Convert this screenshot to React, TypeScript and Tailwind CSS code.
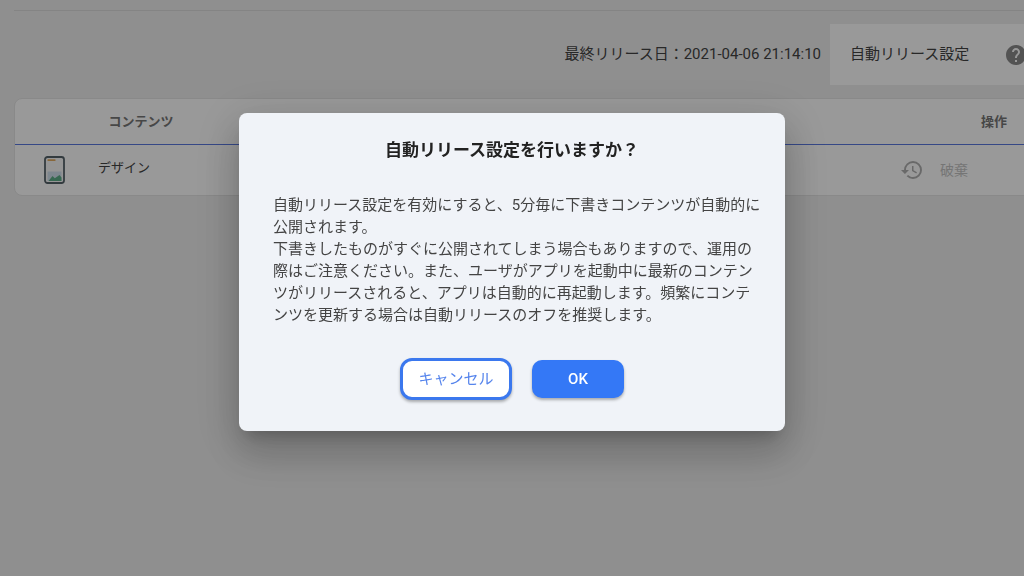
import React from "react";
import { MdHelp, MdHistory } from "react-icons/md";

const rows = [{ name: "デザイン" }];

function DesignIcon() {
  return (
    <svg width="21" height="28" viewBox="0 0 21 28" className="block" aria-hidden="true">
      <rect x="1" y="1" width="19" height="26" rx="2.5" fill="#f8f8f8" stroke="#56636a" strokeWidth="1.8" />
      <rect x="3.5" y="3.2" width="8" height="1.8" rx="0.5" fill="#e3ac62" />
      <path d="M3.5 15.5 H17.5 V25 H3.5 Z" fill="#d3e1ee" />
      <path d="M4.5 25 L8.5 20 L10.8 22.3 L15.5 19 L17.5 21.5 V25 Z" fill="#5cae88" />
    </svg>
  );
}

function ReleaseBar() {
  return (
    <div className="mt-[13px] flex items-center justify-end gap-[9px] text-[15px] text-[#444]">
      <p>最終リリース日：2021-04-06 21:14:10</p>
      <div className="flex h-[61px] w-[259px] items-center gap-[35px] bg-white px-5">
        <span>自動リリース設定</span>
        <button type="button" aria-label="ヘルプ" className="text-[#8a8a8a]">
          <MdHelp size={24} />
        </button>
      </div>
    </div>
  );
}

function ContentTable() {
  return (
    <div className="mt-[13px] overflow-hidden rounded-lg border border-[#e4e4e4] bg-white">
      <table className="w-full table-fixed border-collapse text-[13px]">
        <thead>
          <tr className="h-[45px] border-b border-[#5a78e0] text-[#777]">
            <th className="w-[83px]"></th>
            <th className="w-[86px] font-bold">コンテンツ</th>
            <th></th>
            <th className="w-[188px] font-bold">操作</th>
          </tr>
        </thead>
        <tbody>
          {rows.map((row) => (
            <tr key={row.name} className="h-[51px]">
              <td className="pl-[29px]">
                <DesignIcon />
              </td>
              <td className="pb-1 text-[#444]">{row.name}</td>
              <td></td>
              <td>
                <button type="button" disabled className="flex items-center gap-4 text-sm text-[#c4c4c4]">
                  <MdHistory size={24} className="text-[#b0b0b0]" />
                  破棄
                </button>
              </td>
            </tr>
          ))}
        </tbody>
      </table>
    </div>
  );
}

function ReleaseDialog() {
  return (
    <div className="fixed inset-0 flex items-center justify-center bg-black/40 pb-8">
      <div
        role="dialog"
        aria-modal="true"
        aria-labelledby="release-title"
        className="w-[546px] max-w-full rounded-lg bg-[#f0f3f8] pt-6 pr-5 pb-[31px] pl-[34px] shadow-[0_11px_15px_-7px_rgba(0,0,0,0.2),0_24px_38px_3px_rgba(0,0,0,0.14),0_9px_46px_8px_rgba(0,0,0,0.12)]"
      >
        <h2 id="release-title" className="pr-[14px] text-center text-[17px] leading-[26px] font-bold text-[#222]">
          自動リリース設定を行いますか？
        </h2>
        <p className="mt-[31px] text-[15px] leading-[22px] text-[#444]">
          自動リリース設定を有効にすると、5分毎に下書きコンテンツが自動的に公開されます。
          <br />
          下書きしたものがすぐに公開されてしまう場合もありますので、運用の際はご注意ください。また、ユーザがアプリを起動中に最新のコンテンツがリリースされると、アプリは自動的に再起動します。頻繁にコンテンツを更新する場合は自動リリースのオフを推奨します。
        </p>
        <div className="mt-8 flex items-center justify-center gap-5 pr-[14px] text-[15px]">
          <button
            type="button"
            className="h-[42px] w-28 rounded-xl border-3 border-[#3b78ee] bg-white text-[#5584ec] shadow-[0_2px_3px_rgba(0,0,0,0.3)]"
          >
            キャンセル
          </button>
          <button
            type="button"
            className="h-[38px] w-[92px] rounded-[10px] bg-[#3478f6] font-medium text-white shadow-[0_2px_3px_rgba(0,0,0,0.3)]"
          >
            OK
          </button>
        </div>
      </div>
    </div>
  );
}

export default function App() {
  return (
    <div className="min-h-screen overflow-hidden bg-[#efefef] pt-[10px] pl-[14px] font-[Roboto,'Noto_Sans_CJK_JP',sans-serif]">
      <main className="-mr-[65px] border-t border-[#dcdcdc]">
        <ReleaseBar />
        <ContentTable />
      </main>
      <ReleaseDialog />
    </div>
  );
}
